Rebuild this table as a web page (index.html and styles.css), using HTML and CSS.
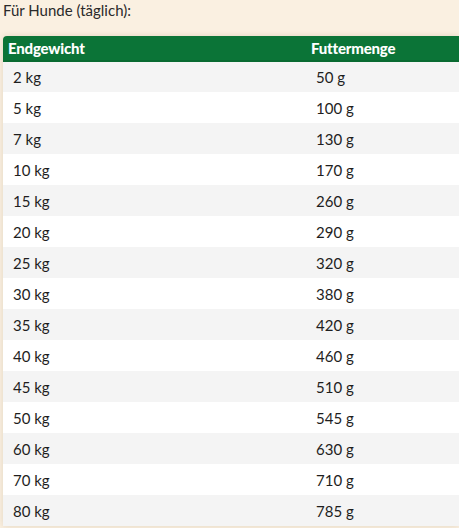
FILE: index.html
```html
<!DOCTYPE html>
<html lang="de">
<head>
<meta charset="utf-8">
<title>Fütterungsempfehlung</title>
<link rel="stylesheet" href="styles.css">
</head>
<body>
<main class="page">
  <p class="title">Für Hunde (täglich):</p>
  <div class="table-wrap">
    <table class="feed">
      <thead>
        <tr><th class="c1">Endgewicht</th><th>Futtermenge</th></tr>
      </thead>
      <tbody>
        <tr><td>2 kg</td><td>50 g</td></tr>
        <tr><td>5 kg</td><td>100 g</td></tr>
        <tr><td>7 kg</td><td>130 g</td></tr>
        <tr><td>10 kg</td><td>170 g</td></tr>
        <tr><td>15 kg</td><td>260 g</td></tr>
        <tr><td>20 kg</td><td>290 g</td></tr>
        <tr><td>25 kg</td><td>320 g</td></tr>
        <tr><td>30 kg</td><td>380 g</td></tr>
        <tr><td>35 kg</td><td>420 g</td></tr>
        <tr><td>40 kg</td><td>460 g</td></tr>
        <tr><td>45 kg</td><td>510 g</td></tr>
        <tr><td>50 kg</td><td>545 g</td></tr>
        <tr><td>60 kg</td><td>630 g</td></tr>
        <tr><td>70 kg</td><td>710 g</td></tr>
        <tr><td>80 kg</td><td>785 g</td></tr>
      </tbody>
    </table>
  </div>
</main>
</body>
</html>
```

FILE: styles.css
```css
html, body {
  margin: 0;
  padding: 0;
  overflow: hidden;
}
body {
  background: #faf0e1;
  font-family: Lato, "Noto Sans", "Liberation Sans", sans-serif;
  color: #1e1e1e;
  width: 459px;
  height: 528px;
}
.page {
  padding-left: 3px;
}
.title {
  margin: 0;
  font-size: 15px;
  line-height: 20px;
  color: #2a2a2a;
}
.table-wrap {
  margin-top: 16px;
  width: 456px;
  border-radius: 4px 0 0 0;
  box-shadow: 0 0 6px rgba(120, 90, 50, 0.18);
  overflow: hidden;
}
.feed {
  width: 100%;
  border-collapse: collapse;
  table-layout: fixed;
}
.feed th {
  background: #0b7437;
  color: #fff;
  font-weight: 900;
  font-size: 15px;
  text-align: left;
  height: 25px;
  padding: 0 5px;
  box-sizing: border-box;
  border-bottom: 2px solid #096a31;
  letter-spacing: -0.2px;
}
.feed th.c1 {
  width: 303px;
}
.feed td {
  height: 31px;
  padding: 0 10px;
  font-size: 15px;
  box-sizing: border-box;
}
.feed tbody tr:nth-child(odd) td {
  background: #f4f4f4;
}
.feed tbody tr:nth-child(even) td {
  background: #ffffff;
}
```
